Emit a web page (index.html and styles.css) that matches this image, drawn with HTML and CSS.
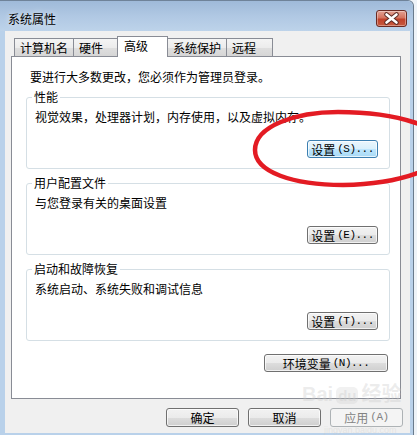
FILE: index.html
```html
<!DOCTYPE html>
<html>

<head>
    <meta charset="UTF-8">
    <title>系统属性</title>
    <link rel="stylesheet" href="styles.css">
</head>

<body>
    <div class="window">
        <div class="titlebar">
            <span class="title">系统属性</span>
            <div class="close">
                <svg width="31" height="17" viewBox="0 0 31 17">
                    <path d="M10.5 4.5 L20.5 12.5 M20.5 4.5 L10.5 12.5" stroke="#5a2a24" stroke-width="4.6" stroke-linecap="round" fill="none"/>
                    <path d="M10.5 4.5 L20.5 12.5 M20.5 4.5 L10.5 12.5" stroke="#ffffff" stroke-width="2.6" stroke-linecap="round" fill="none"/>
                </svg>
            </div>
        </div>

        <div class="client">
            <div class="tabs">
                <div class="tab">计算机名</div>
                <div class="tab">硬件</div>
                <div class="tab active">高级</div>
                <div class="tab">系统保护</div>
                <div class="tab">远程</div>
            </div>

            <div class="panel">
                <div class="intro">要进行大多数更改，您必须作为管理员登录。</div>

                <fieldset class="group first">
                    <legend>性能</legend>
                    <div class="desc">视觉效果，处理器计划，内存使用，以及虚拟内存。</div>
                    <div class="row">
                        <button class="btn hot set">设置<span class="key">(S)...</span></button>
                    </div>
                </fieldset>

                <fieldset class="group">
                    <legend>用户配置文件</legend>
                    <div class="desc">与您登录有关的桌面设置</div>
                    <div class="row">
                        <button class="btn set">设置<span class="key">(E)...</span></button>
                    </div>
                </fieldset>

                <fieldset class="group">
                    <legend>启动和故障恢复</legend>
                    <div class="desc">系统启动、系统失败和调试信息</div>
                    <div class="row">
                        <button class="btn set">设置<span class="key">(T)...</span></button>
                    </div>
                </fieldset>

                <div class="env-row">
                    <button class="btn env">环境变量<span class="key">(N)...</span></button>
                </div>
            </div>

            <div class="dialog-buttons">
                <button class="btn wide">确定</button>
                <button class="btn wide">取消</button>
                <button class="btn wide" disabled>应用<span class="key">(A)</span></button>
            </div>
        </div>
    </div>

    <!-- 红色手绘圈 -->
    <svg class="mark" width="417" height="435" viewBox="0 0 417 435">
        <path d="M255 150 C255 126 296 112 338 112 C398 112 446 128 446 148 C446 168 400 184 343 185 C293 185 255 172 255 150 Z"
              stroke="#e31b23" stroke-width="4.5" fill="none"/>
    </svg>

    <!-- 水印 -->
    <div class="watermark">
        <div class="wm-logo">Bai<span class="wm-du">du</span>经验</div>
        <div class="wm-url">jingyan.baidu.com</div>
    </div>
</body>

</html>
```

FILE: styles.css
```css
body {
    margin: 0;
    padding: 0;
    width: 417px;
    height: 435px;
    overflow: hidden;
    position: relative;
    background: #eef3f8;
    font-family: "Noto Sans CJK SC", "Liberation Sans", sans-serif;
    font-size: 12px;
    color: #000;
}

.window {
    width: 413px;
    height: 434px;
    border-top: 1px solid #6f8399;
    border-right: 1px solid #6a7b8c;
    border-top-right-radius: 6px;
    background: #b9d1ea;
    display: flex;
    flex-direction: column;
}

.titlebar {
    height: 30px;
    flex: none;
    display: flex;
    align-items: flex-start;
    padding: 0 6px 0 8px;
    background: linear-gradient(180deg, #9fbad9 0%, #b0c8e3 50%, #bdd3ea 100%);
    border-top-right-radius: 6px;
}

.title {
    margin-top: 11px;
    line-height: 14px;
    text-shadow: 0 0 6px rgba(255, 255, 255, 0.8);
}

.close {
    margin-left: auto;
    margin-top: 9px;
    width: 31px;
    height: 17px;
    box-sizing: border-box;
    border: 1px solid #6b2a22;
    border-radius: 3px;
    background: linear-gradient(180deg, #e3a193 0%, #d4735f 45%, #c0412a 55%, #c75a3f 100%);
    box-shadow: inset 0 0 0 1px rgba(255, 255, 255, 0.35);
    display: flex;
}

.close svg {
    margin: -1px;
}

.client {
    margin-left: 5px;
    width: 405px;
    height: 402px;
    background: #f0f0f0;
    display: flex;
    flex-direction: column;
}

.tabs {
    height: 25px;
    flex: none;
    display: flex;
    align-items: flex-end;
    padding-left: 9px;
}

.tab {
    height: 17px;
    line-height: 17px;
    min-width: 35px;
    padding: 0 5px;
    margin-right: -1px;
    border: 1px solid #898c95;
    border-bottom: none;
    background: linear-gradient(180deg, #f4f4f4 0%, #ececec 50%, #dedede 55%, #d6d6d6 100%);
}

.tab.active {
    height: 20px;
    line-height: 18px;
    min-width: 37px;
    padding: 0 6px;
    margin: 0 -1px -1px -2px;
    background: #fff;
    position: relative;
    z-index: 1;
}

.panel {
    margin-left: 6px;
    width: 390px;
    height: 343px;
    box-sizing: border-box;
    border: 1px solid #898c95;
    background: #fff;
    padding: 13px 10px 0 14px;
}

.intro {
    line-height: 14px;
    padding-left: 4px;
}

.group {
    margin: 7px 0 0;
    padding: 6px 11px 10px 8px;
    border: 1px solid #d5dfe5;
    border-radius: 3px;
    min-width: 0;
}

.group.first {
    margin-top: 6px;
}

.group legend {
    padding: 0 2px;
    margin-left: -3px;
    line-height: 14px;
}

.desc {
    line-height: 14px;
}

.row {
    display: flex;
    justify-content: flex-end;
    margin-top: 16px;
}

.btn {
    height: 18px;
    padding: 0;
    border: 1px solid #707070;
    border-radius: 3px;
    background: linear-gradient(180deg, #f2f2f2 0%, #ebebeb 50%, #dddddd 51%, #cfcfcf 100%);
    box-shadow: inset 0 0 0 1px rgba(255, 255, 255, 0.7);
    font-family: "Noto Sans CJK SC", "Liberation Sans", sans-serif;
    font-size: 12px;
    line-height: 15px;
    color: #000;
    display: flex;
    align-items: center;
    justify-content: center;
}

.btn.hot {
    border-color: #3c7fb1;
    background: linear-gradient(180deg, #eaf6fd 0%, #d9f0fc 50%, #bee6fd 51%, #a7d9f5 100%);
}

.btn:disabled {
    border-color: #adb2b5;
    background: #f4f4f4;
    box-shadow: none;
    color: #838383;
}

.key {
    font-family: "Liberation Mono", monospace;
    font-size: 11px;
    letter-spacing: -0.5px;
    margin-left: 2px;
}

.set {
    width: 71px;
}

.env-row {
    display: flex;
    justify-content: flex-end;
    margin-top: 13px;
    padding-right: 2px;
}

.env {
    width: 124px;
}

.dialog-buttons {
    display: flex;
    justify-content: flex-end;
    gap: 9px;
    margin-top: 9px;
    padding-right: 7px;
}

.wide {
    width: 73px;
    height: 19px;
}

.mark {
    position: absolute;
    left: 0;
    top: 0;
    pointer-events: none;
}

.watermark {
    position: absolute;
    left: 302px;
    top: 382px;
    color: rgba(200, 200, 200, 0.35);
    pointer-events: none;
}

.wm-logo {
    font-family: "Liberation Sans", "Noto Sans CJK SC", sans-serif;
    font-size: 20px;
    font-weight: bold;
    line-height: 24px;
}

.wm-du {
    font-size: 15px;
    margin: 0 3px;
    padding: 0 2px;
    border-radius: 5px;
    background: rgba(200, 200, 200, 0.25);
}

.wm-url {
    font-family: "Liberation Sans", sans-serif;
    font-size: 9px;
    line-height: 10px;
    margin-top: 17px;
    padding-left: 22px;
}
```
